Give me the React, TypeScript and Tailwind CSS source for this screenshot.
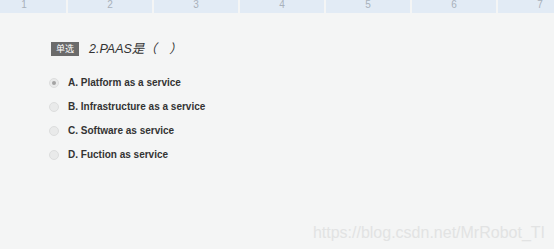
const tabs = ["1", "2", "3", "4", "5", "6", "7"];

const options = [
  { key: "A", text: "Platform as a service", checked: true },
  { key: "B", text: "Infrastructure as a service" },
  { key: "C", text: "Software as service" },
  { key: "D", text: "Fuction as service" },
];

export default function App() {
  return (
    <div
      className="w-[554px] h-[249px] bg-[#f4f5f5] overflow-hidden flex flex-col"
      style={{ fontFamily: '"Liberation Sans", "Noto Sans CJK SC", sans-serif' }}
    >
      {/* question number strip */}
      <div className="flex gap-[2px] ml-[-18px] h-[13px] shrink-0">
        {tabs.map((t) => (
          <div
            key={t}
            className="w-[84px] shrink-0 bg-[#e2ebf5] text-[#a9b1bb] text-[10px] leading-[10px] text-center"
          >
            {t}
          </div>
        ))}
      </div>

      <div className="pl-[49px] pt-[27px]">
        <div className="flex items-center gap-[10px] pl-[2px]">
          <span className="bg-[#6b6b6b] text-white text-[9px] leading-[12px] px-[5px] py-[1px]">单选</span>
          <span className="italic text-[#333] text-[12.5px]">2.PAAS是（　）</span>
        </div>

        <ul className="mt-[17px] flex flex-col gap-[10px]">
          {options.map((o) => (
            <li key={o.key} className="flex items-center h-[14px]">
              <span className="w-[10px] h-[10px] rounded-full bg-[#e9eaea] border border-[#dddede] flex items-center justify-center">
                {o.checked && <span className="w-[4px] h-[4px] rounded-full bg-[#a3a3a3]" />}
              </span>
              <span className="ml-[9px] text-[10px] font-bold text-[#333]">
                {o.key}. {o.text}
              </span>
            </li>
          ))}
        </ul>
      </div>

      <div className="mt-auto mb-[4px] mr-[9px] self-end text-[16px] text-[#e2e3e3]">
        https://blog.csdn.net/MrRobot_TI
      </div>
    </div>
  );
}
